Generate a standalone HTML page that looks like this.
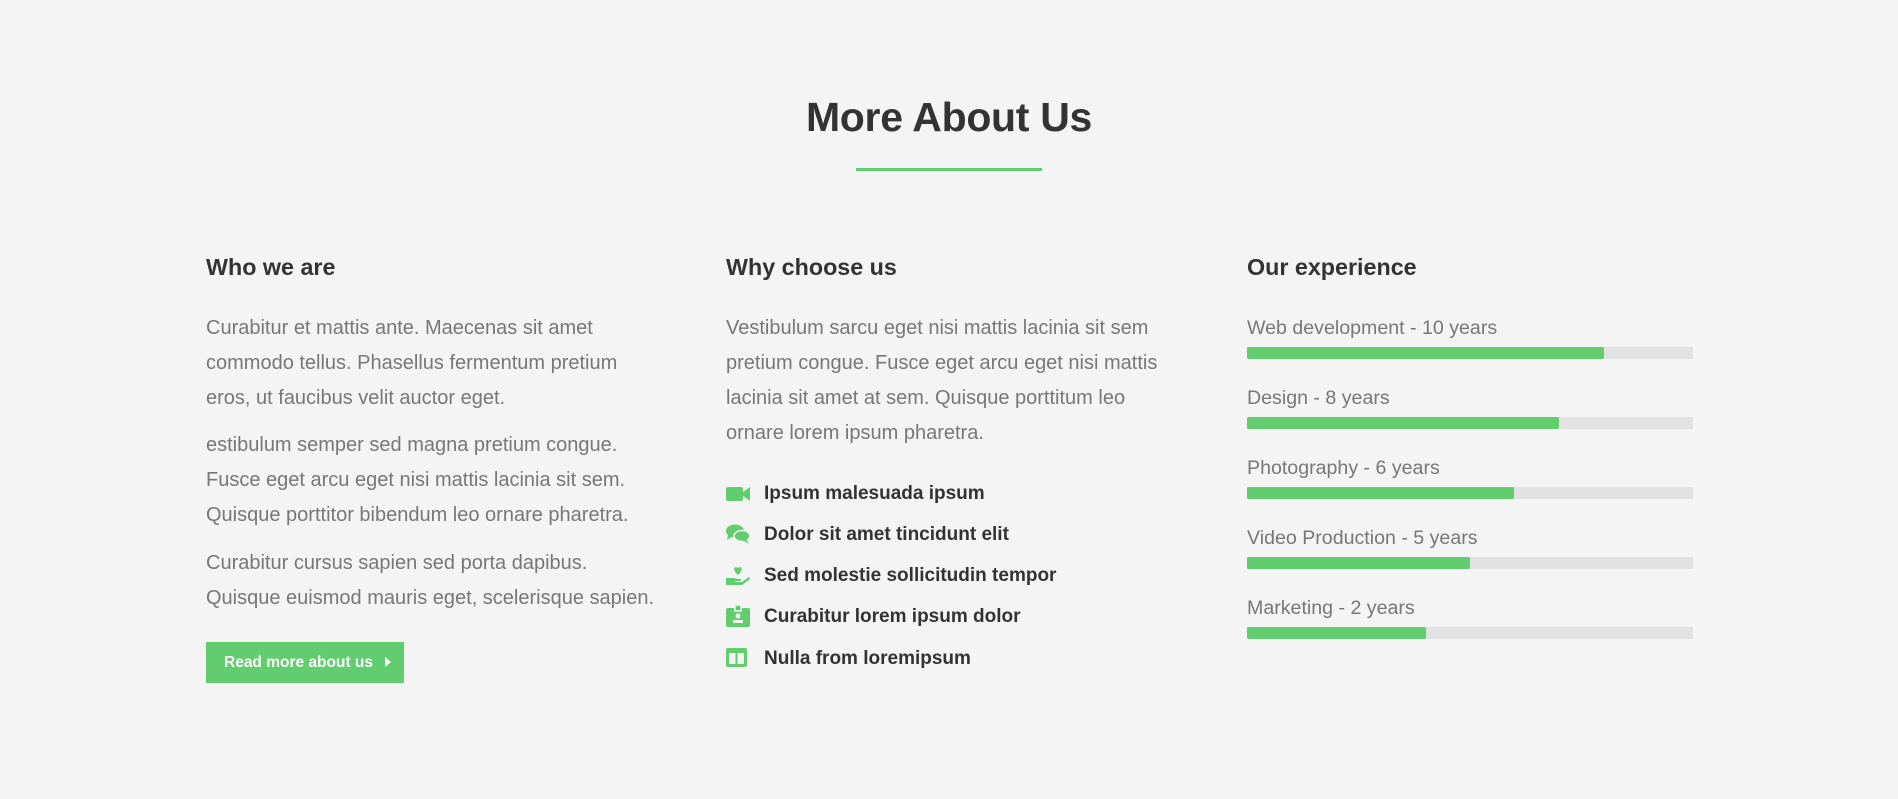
<!DOCTYPE html>
<html><head><style>
*{margin:0;padding:0;box-sizing:border-box}
body{width:1898px;height:799px;background:#f4f4f4;font-family:"Liberation Sans",Arial,sans-serif;position:relative;overflow:hidden;color:#333}
h1{position:absolute;left:0;width:1898px;text-align:center;top:94px;font-size:41px;font-weight:bold;color:#333;letter-spacing:-0.3px}
.line{position:absolute;left:856px;top:168px;width:186px;height:3px;background:#62cd6e}
h3{position:absolute;top:254px;font-size:23.3px;font-weight:bold;color:#333}
p{position:absolute;font-size:20px;line-height:35px;color:#777;white-space:nowrap}
.btn{position:absolute;left:206px;top:642px;width:198px;height:41px;background:#62cd6e;color:#fff;font-weight:bold;font-size:15.5px;line-height:41px;padding-left:18px;white-space:nowrap}
.li{position:absolute;left:764px;font-size:19px;font-weight:bold;color:#333;line-height:24px;white-space:nowrap}
.ic{position:absolute;left:726px;width:24px;height:22px}
.lab{position:absolute;left:1247px;font-size:19.6px;color:#777;line-height:24px;white-space:nowrap}
.bar{position:absolute;left:1247px;width:446px;height:12px;background:#e2e2e2}
.bar div{height:12px;background:#62cd6e;border-radius:2px}
</style></head><body>
<h1>More About Us</h1>
<div class="line"></div>
<h3 style="left:206px">Who we are</h3>
<h3 style="left:726px">Why choose us</h3>
<h3 style="left:1247px">Our experience</h3>
<p style="left:206px;top:311px">Curabitur et mattis ante. Maecenas sit amet<br>commodo tellus. Phasellus fermentum pretium<br>eros, ut faucibus velit auctor eget.</p>
<p style="left:206px;top:428px">estibulum semper sed magna pretium congue.<br>Fusce eget arcu eget nisi mattis lacinia sit sem.<br>Quisque porttitor bibendum leo ornare pharetra.</p>
<p style="left:206px;top:546px">Curabitur cursus sapien sed porta dapibus.<br>Quisque euismod mauris eget, scelerisque sapien.</p>
<div class="btn">Read more about us <span style="display:inline-block;margin-left:8px;width:0;height:0;border-left:6px solid #fff;border-top:5px solid transparent;border-bottom:5px solid transparent;vertical-align:0"></span></div>
<p style="left:726px;top:311px">Vestibulum sarcu eget nisi mattis lacinia sit sem<br>pretium congue. Fusce eget arcu eget nisi mattis<br>lacinia sit amet at sem. Quisque porttitum leo<br>ornare lorem ipsum pharetra.</p>

<svg class="ic" style="top:483px" viewBox="0 0 24 22"><rect x="0" y="4" width="17" height="14" rx="2" fill="#62cd6e"/><path d="M17 9 L24 4 V18 L17 13Z" fill="#62cd6e"/></svg>
<div class="li" style="top:482px">Ipsum malesuada ipsum</div>
<svg class="ic" style="top:523px" viewBox="0 0 24 22"><ellipse cx="9" cy="8" rx="9" ry="6.5" fill="#62cd6e"/><path d="M2 12 L1 17 L7 13Z" fill="#62cd6e"/><ellipse cx="16" cy="13" rx="8" ry="5.5" fill="#62cd6e" stroke="#f4f4f4" stroke-width="1.5"/><path d="M20 16 L23 21 L16 17Z" fill="#62cd6e"/></svg>
<div class="li" style="top:523px">Dolor sit amet tincidunt elit</div>
<svg class="ic" style="top:564px" viewBox="0 0 24 22"><path d="M12 11 C6 6 8 1 12 4 C16 1 18 6 12 11Z" fill="#62cd6e"/><path d="M0 14 H6 C9 14 11 15 13 15 H15 V17 H9 V18 H16 L23 13 C24 14 24 15 23 16 L16 21 H0Z" fill="#62cd6e"/></svg>
<div class="li" style="top:564px">Sed molestie sollicitudin tempor</div>
<svg class="ic" style="top:605px" viewBox="0 0 24 22"><rect x="0" y="3" width="24" height="19" rx="2" fill="#62cd6e"/><rect x="9" y="0" width="6" height="6" fill="#62cd6e" stroke="#f4f4f4" stroke-width="1.5"/><circle cx="12" cy="11" r="2.5" fill="#f4f4f4"/><rect x="7" y="15" width="10" height="3" fill="#f4f4f4"/></svg>
<div class="li" style="top:605px">Curabitur lorem ipsum dolor</div>
<svg class="ic" style="top:647px" viewBox="0 0 24 22"><rect x="0" y="1" width="21" height="19" rx="2" fill="#62cd6e"/><rect x="3" y="6" width="6.5" height="11" fill="#f4f4f4"/><rect x="11.5" y="6" width="6.5" height="11" fill="#f4f4f4"/></svg>
<div class="li" style="top:647px">Nulla from loremipsum</div>

<div class="lab" style="top:316px">Web development - 10 years</div>
<div class="bar" style="top:347px"><div style="width:357px"></div></div>
<div class="lab" style="top:386px">Design - 8 years</div>
<div class="bar" style="top:417px"><div style="width:312px"></div></div>
<div class="lab" style="top:456px">Photography - 6 years</div>
<div class="bar" style="top:487px"><div style="width:267px"></div></div>
<div class="lab" style="top:526px">Video Production - 5 years</div>
<div class="bar" style="top:557px"><div style="width:223px"></div></div>
<div class="lab" style="top:596px">Marketing - 2 years</div>
<div class="bar" style="top:627px"><div style="width:179px"></div></div>
</body></html>
